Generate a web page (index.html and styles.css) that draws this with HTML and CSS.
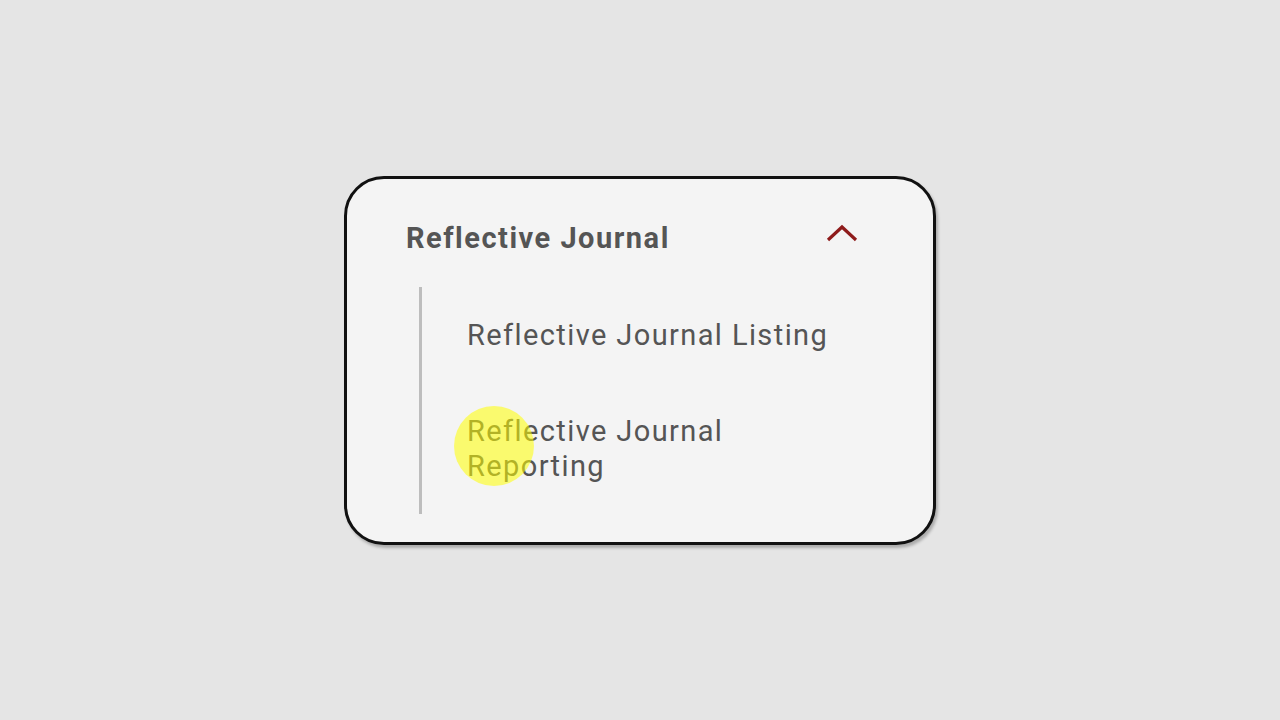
FILE: index.html
```html
<!DOCTYPE html>
<html>
<head>
<meta charset="utf-8">
<link rel="stylesheet" href="styles.css">
</head>
<body>
<div class="stage">
  <div class="card">
    <div class="head">
      <span class="title">Reflective Journal</span>
      <svg class="chev" width="32" height="18" viewBox="0 0 32 18"><path d="M2 16 L16 3 L30 16" fill="none" stroke="#8e1b1b" stroke-width="3.2"/></svg>
    </div>
    <div class="sub">
      <div class="item">Reflective Journal Listing</div>
      <div class="item item-wrap">Reflective Journal Reporting<span class="dot"></span></div>
    </div>
  </div>
</div>
</body>
</html>
```
FILE: styles.css
```css
html, body { margin: 0; padding: 0; }
body {
  background: #e5e5e5;
  font-family: Roboto, "Liberation Sans", sans-serif;
  color: #555;
}
.stage {
  width: 1280px;
  height: 720px;
  display: flex;
  align-items: center;
  justify-content: center;
}
.card {
  width: 586px;
  height: 363px;
  box-sizing: content-box;
  border: 3px solid #111;
  border-radius: 40px;
  background: #f4f4f4;
  box-shadow: 2px 3px 3px rgba(0,0,0,0.25);
  display: flex;
  flex-direction: column;
}
.head {
  display: flex;
  align-items: center;
  justify-content: space-between;
  padding: 42px 75px 0 59px;
  height: 34px;
}
.title {
  font-weight: 700;
  font-size: 29px;
  line-height: 34px;
  letter-spacing: 1.5px;
  color: #555;
}
.chev { display: block; margin-top: -10px; }
.sub {
  margin: 32px 0 0 72px;
  border-left: 3px solid #bdbdbd;
  height: 227px;
  padding-left: 45px;
  display: flex;
  flex-direction: column;
}
.item {
  font-size: 29px;
  letter-spacing: 1.4px;
  line-height: 35px;
  color: #555;
  max-width: 375px;
}
.item:first-child { margin-top: 31px; }
.item-wrap { margin-top: 61px; position: relative; }
.dot {
  position: absolute;
  left: -13px;
  top: -8px;
  width: 80px;
  height: 80px;
  border-radius: 50%;
  background: rgba(255,255,0,0.55);
}
```
